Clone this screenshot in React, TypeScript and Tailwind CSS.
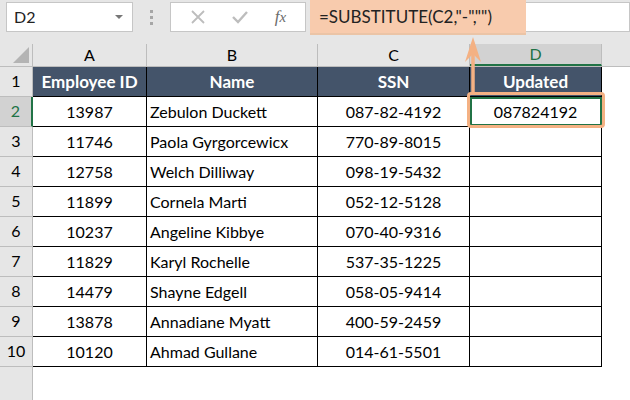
import React from 'react'

const rows = [
  ['13987', 'Zebulon Duckett', '087-82-4192', '087824192'],
  ['11746', 'Paola Gyrgorcewicx', '770-89-8015', ''],
  ['12758', 'Welch Dilliway', '098-19-5432', ''],
  ['11899', 'Cornela Marti', '052-12-5128', ''],
  ['10237', 'Angeline Kibbye', '070-40-9316', ''],
  ['11829', 'Karyl Rochelle', '537-35-1225', ''],
  ['14479', 'Shayne Edgell', '058-05-9414', ''],
  ['13878', 'Annadiane Myatt', '400-59-2459', ''],
  ['10120', 'Ahmad Gullane', '014-61-5501', ''],
]

const font = { fontFamily: 'Lato, "Liberation Sans", sans-serif' }

function ColHead({ label, w, active }: { label: string; w: string; active?: boolean }) {
  return (
    <div
      className={`${w} h-full flex items-center justify-center border-r border-[#bdbdbd] ${
        active ? 'bg-[#d2d2d2] text-[#217346] border-b-2 border-b-[#217346]' : 'text-black'
      }`}
    >
      {label}
    </div>
  )
}

export default function App() {
  return (
    <div className="relative w-[630px] h-[400px] bg-white overflow-hidden text-[16px]" style={font}>
      {/* formula bar */}
      <div className="h-[44px] bg-[#e6e6e6] flex items-start pt-[2px] pl-[6px]">
        <div className="w-[127px] h-[30px] bg-white border border-[#c6c6c6] flex items-center pl-[7px] pr-[9px] justify-between">
          <span className="text-[16px] text-[#222]">D2</span>
          <span className="w-0 h-0 border-l-[4px] border-r-[4px] border-t-[4px] border-l-transparent border-r-transparent border-t-[#777]" />
        </div>
        <div className="w-[37px] flex flex-col items-center gap-[3px] pt-[8px]">
          <span className="w-[3px] h-[3px] bg-[#a6a6a6]" />
          <span className="w-[3px] h-[3px] bg-[#a6a6a6]" />
          <span className="w-[3px] h-[3px] bg-[#a6a6a6]" />
        </div>
        <div className="w-[136px] h-[30px] bg-white border border-[#c6c6c6] flex items-center justify-around px-[6px]">
          <svg width="16" height="16" viewBox="0 0 16 16">
            <path d="M2 2 L14 14 M14 2 L2 14" stroke="#bdbdbd" strokeWidth="1.8" fill="none" />
          </svg>
          <svg width="18" height="16" viewBox="0 0 18 16">
            <path d="M2 8 L7 13 L16 3" stroke="#bdbdbd" strokeWidth="2.4" fill="none" />
          </svg>
          <span className="italic text-[#6b6b6b] text-[17px]" style={{ fontFamily: '"Liberation Serif", serif' }}>
            f<span className="text-[15px]">x</span>
          </span>
        </div>
        <div className="ml-[4px] flex-1 h-[30px] bg-white border border-[#c6c6c6]" />
      </div>

      {/* formula highlight */}
      <div className="absolute left-[310px] top-0 w-[216px] h-[35px] bg-[#f8cbad] border-b-2 border-[#ebc4a6] flex items-center pl-[9px] text-[17px] text-[#222]">
        =SUBSTITUTE(C2,"-","")
      </div>

      {/* column headers */}
      <div className="h-[23px] flex bg-[#e6e6e6] border-b border-[#bdbdbd]">
        <div className="w-[33px] h-full border-r border-[#bdbdbd] relative">
          <svg className="absolute right-[3px] bottom-[3px]" width="16" height="16" viewBox="0 0 16 16">
            <path d="M16 0 L16 16 L0 16 Z" fill="#b4b4b4" />
          </svg>
        </div>
        <ColHead label="A" w="w-[114px]" />
        <ColHead label="B" w="w-[171px]" />
        <ColHead label="C" w="w-[152px]" />
        <ColHead label="D" w="w-[132px]" active />
        <div className="flex-1" />
      </div>

      {/* row 1 */}
      <div className="h-[30px] flex">
        <div className="w-[33px] bg-[#e6e6e6] border-r border-b border-[#bdbdbd] flex items-end justify-center pb-[3px]">1</div>
        <div className="flex bg-[#44546a] text-white font-bold text-[17px] border-b border-black">
          <div className="w-[114px] flex items-center justify-center border-r border-black">Employee ID</div>
          <div className="w-[171px] flex items-center justify-center border-r border-black">Name</div>
          <div className="w-[152px] flex items-center justify-center border-r border-black">SSN</div>
          <div className="w-[132px] flex items-center justify-center border-r border-black">Updated</div>
        </div>
      </div>

      {rows.map((r, i) => (
        <div key={i} className="h-[30px] flex">
          <div
            className={`w-[33px] border-r border-b border-[#bdbdbd] flex items-end justify-center pb-[3px] ${
              i === 0 ? 'bg-[#d2d2d2] text-[#217346] border-r-2 border-r-[#217346]' : 'bg-[#e6e6e6] text-black'
            }`}
          >
            {i + 2}
          </div>
          <div className="flex border-b border-black text-black">
            <div className="w-[114px] flex items-center justify-center border-r border-black">{r[0]}</div>
            <div className="w-[171px] flex items-center pl-[3px] border-r border-black">{r[1]}</div>
            <div className="w-[152px] flex items-center justify-center border-r border-black">{r[2]}</div>
            <div
              className={`w-[132px] flex items-center justify-center border-r border-black ${
                i === 0 ? 'outline-2 outline-[#217346] -outline-offset-2' : ''
              }`}
            >
              {r[3]}
            </div>
          </div>
        </div>
      ))}

      <div className="w-[33px] h-[33px] bg-[#e6e6e6] border-r border-[#bdbdbd]" />

      {/* callout box + arrow */}
      <div className="absolute left-[467px] top-[92px] w-[138px] h-[36px] rounded-[4px] border-[3px] border-[#f4b183]" />
      <svg className="absolute left-[463px] top-[36px]" width="20" height="58" viewBox="0 0 20 58">
        <path d="M10 58 L10 14" stroke="#f4b183" strokeWidth="3.5" fill="none" />
        <path d="M10 1 L18 26 L10 18 L2 26 Z" fill="#f4b183" />
      </svg>
    </div>
  )
}
